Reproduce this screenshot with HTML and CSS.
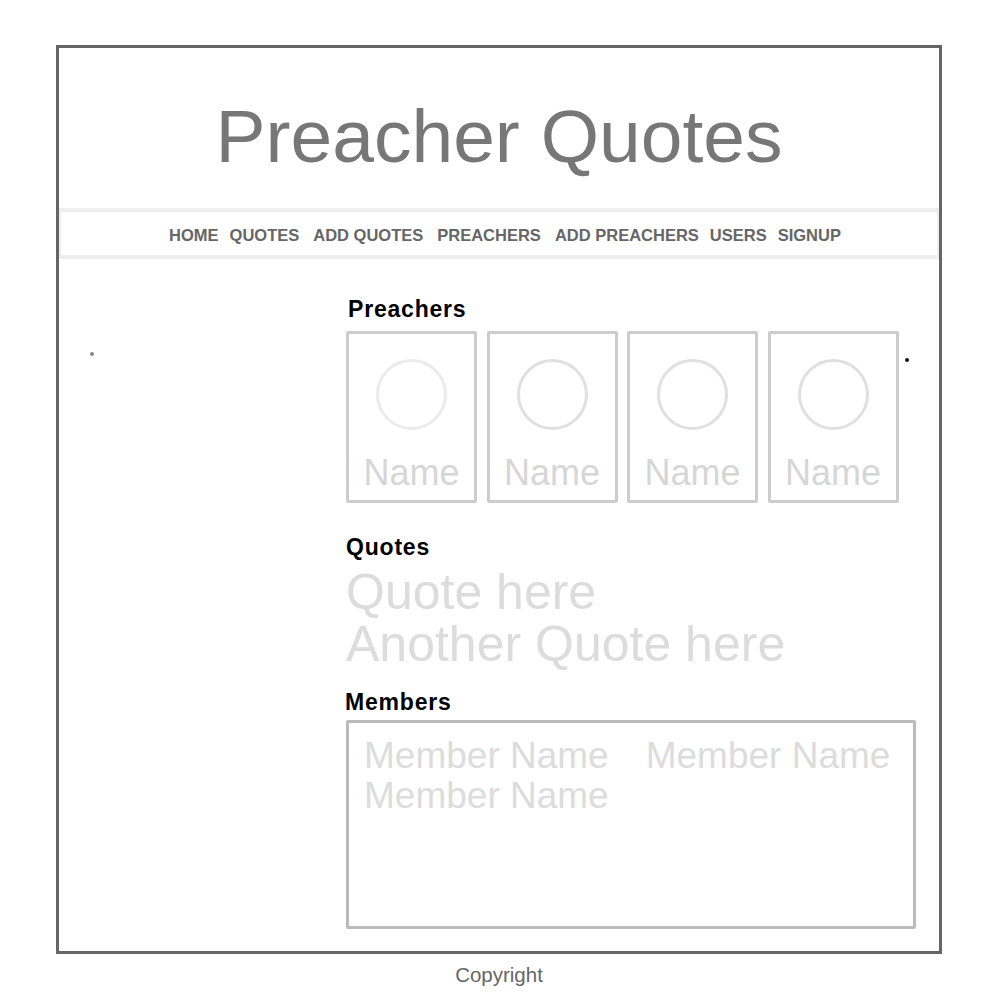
FILE: index.html
```html
<!DOCTYPE html>
<html>
<head>
    <title>Preacher Quotes</title>
    <link rel="stylesheet" href="styles.css">
</head>
<body>
    <div class="page">
        <div class="frame">
            <h1>Preacher Quotes</h1>
            <nav>
                <ul>
                    <li><a href="#">HOME</a></li>
                    <li><a href="#">QUOTES</a></li>
                    <li class="wide"><a href="#">ADD QUOTES</a></li>
                    <li class="wide"><a href="#">PREACHERS</a></li>
                    <li class="wide"><a href="#">ADD PREACHERS</a></li>
                    <li><a href="#">USERS</a></li>
                    <li><a href="#">SIGNUP</a></li>
                </ul>
            </nav>
            <div class="main">
                <div class="sidebar">
                    <span class="dot grey"></span>
                </div>
                <div class="content">
                    <h2 class="first">Preachers</h2>
                    <div class="cards">
                        <div class="card">
                            <div class="avatar light"></div>
                            <div class="name">Name</div>
                        </div>
                        <div class="card">
                            <div class="avatar"></div>
                            <div class="name">Name</div>
                        </div>
                        <div class="card">
                            <div class="avatar"></div>
                            <div class="name">Name</div>
                        </div>
                        <div class="card">
                            <div class="avatar"></div>
                            <div class="name">Name</div>
                        </div>
                        <span class="dot black"></span>
                    </div>

                    <h2>Quotes</h2>
                    <div class="quotes">
                        <p>Quote here</p>
                        <p>Another Quote here</p>
                    </div>

                    <h2 class="members-title">Members</h2>
                    <div class="members">
                        <span>Member Name</span>
                        <span>Member Name</span>
                        <span>Member Name</span>
                    </div>
                </div>
            </div>
        </div>
        <footer>Copyright</footer>
    </div>
</body>
</html>
```

FILE: styles.css
```css
body {
    margin: 0;
    font-family: 'Liberation Sans', Arial, sans-serif;
    background-color: #fff;
}
.page {
    width: 886px;
    margin: 45px 0 0 56px;
}
.frame {
    box-sizing: border-box;
    height: 909px;
    border: 3px solid #666;
}
h1 {
    margin: 0;
    padding-top: 48px;
    height: 112px;
    line-height: 80px;
    font-size: 75px;
    font-weight: normal;
    color: #777;
    text-align: center;
}
nav {
    border-top: 4px solid #eee;
    border-bottom: 4px solid #eee;
    border-left: 2px solid #eee;
    border-right: 2px solid #eee;
    height: 39px;
    padding-top: 4px;
    display: flex;
    justify-content: center;
    align-items: center;
}
nav ul {
    list-style-type: none;
    margin: 0 0 0 12px;
    padding: 0;
    display: flex;
    gap: 11px;
}
nav ul li.wide {
    margin-left: 3px;
}
nav ul li a {
    color: #666;
    text-decoration: none;
    font-size: 16.5px;
    font-weight: bold;
}
.main {
    display: flex;
}
.sidebar {
    width: 287px;
}
.dot {
    display: block;
    border-radius: 50%;
}
.dot.grey {
    width: 4px;
    height: 4px;
    background-color: #888;
    margin: 93px 0 0 31px;
}
.dot.black {
    width: 4px;
    height: 4px;
    background-color: #111;
    margin: 27px 0 0 -3px;
}
.content {
    flex: 1;
}
h2 {
    margin: 32px 0 0 0;
    font-size: 23px;
    letter-spacing: 0.8px;
    line-height: 25px;
    color: #000;
}
h2.first {
    margin-top: 38px;
    margin-left: 2px;
}
h2.members-title {
    margin-top: 20px;
    margin-left: -1px;
}
.cards {
    display: flex;
    align-items: flex-start;
    gap: 9.5px;
    margin-top: 9px;
}
.card {
    box-sizing: border-box;
    width: 131px;
    height: 172px;
    border: 3px solid #ccc;
    border-radius: 2px;
    display: flex;
    flex-direction: column;
    align-items: center;
}
.avatar {
    box-sizing: border-box;
    width: 71px;
    height: 71px;
    margin-top: 25px;
    border: 3px solid #e0e0e0;
    border-radius: 50%;
}
.avatar.light {
    border-color: #ebebeb;
}
.name {
    margin-top: 24px;
    font-size: 36px;
    line-height: 37px;
    color: #d6d6d6;
}
.quotes {
    margin-top: 6px;
}
.quotes p {
    margin: 0;
    font-size: 50px;
    line-height: 52px;
    color: #dcdcdc;
}
.members {
    box-sizing: border-box;
    width: 570px;
    height: 209px;
    margin-top: 5px;
    padding: 13px 10px 0 15px;
    border: 3px solid #bbb;
    border-radius: 2px;
    display: flex;
    flex-wrap: wrap;
    align-content: flex-start;
    column-gap: 37px;
}
.members span {
    font-size: 37px;
    line-height: 40px;
    color: #dcdcdc;
}
footer {
    margin-top: 9px;
    text-align: center;
    font-size: 20.5px;
    color: #666;
}
```
